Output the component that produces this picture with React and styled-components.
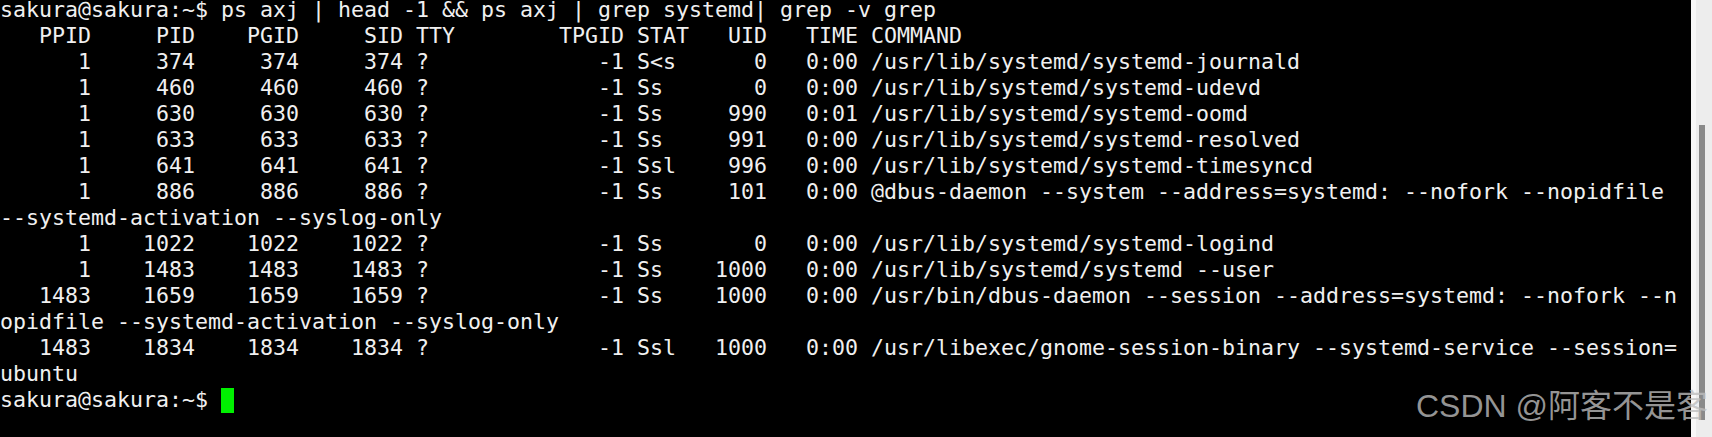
import React from 'react'
import styled, { createGlobalStyle } from 'styled-components'

const COLS = 129

const GlobalStyle = createGlobalStyle`
  html, body {
    margin: 0;
    padding: 0;
    background: #000;
  }
  body {
    width: 1712px;
    height: 437px;
    overflow: hidden;
  }
`

const Window = styled.div`
  position: relative;
  display: flex;
  width: 1712px;
  height: 437px;
  overflow: hidden;
`

const Screen = styled.div`
  flex: 1;
  background: #000;
  overflow: hidden;
`

const Output = styled.div`
  margin-top: -3px;
  font-family: 'DejaVu Sans Mono', 'Liberation Mono', monospace;
  font-size: 21.6px;
  line-height: 26px;
  color: #f0f0f0;
`

const Line = styled.div`
  height: 26px;
  white-space: pre;
`

const Cursor = styled.span`
  display: inline-block;
  width: 13px;
  height: 25px;
  margin-top: 1px;
  vertical-align: top;
  background: #00f000;
`

const Track = styled.div`
  width: 16px;
  background: #ededed;
  border-left: 5px solid #f8f8f8;
`

const Thumb = styled.div`
  width: 6px;
  height: 295px;
  margin: 125px 0 0 3px;
  background: #8a8a8a;
`

const Watermark = styled.div`
  position: absolute;
  left: 1416px;
  top: 390px;
  font-family: 'Liberation Sans', 'Noto Sans CJK SC', sans-serif;
  font-size: 32px;
  line-height: 32px;
  white-space: nowrap;
  color: rgba(190, 190, 190, 0.78);
`

const procs = [
  ['1', '374', 'S<s', '0', '0:00', '/usr/lib/systemd/systemd-journald'],
  ['1', '460', 'Ss', '0', '0:00', '/usr/lib/systemd/systemd-udevd'],
  ['1', '630', 'Ss', '990', '0:01', '/usr/lib/systemd/systemd-oomd'],
  ['1', '633', 'Ss', '991', '0:00', '/usr/lib/systemd/systemd-resolved'],
  ['1', '641', 'Ssl', '996', '0:00', '/usr/lib/systemd/systemd-timesyncd'],
  ['1', '886', 'Ss', '101', '0:00', '@dbus-daemon --system --address=systemd: --nofork --nopidfile --systemd-activation --syslog-only'],
  ['1', '1022', 'Ss', '0', '0:00', '/usr/lib/systemd/systemd-logind'],
  ['1', '1483', 'Ss', '1000', '0:00', '/usr/lib/systemd/systemd --user'],
  ['1483', '1659', 'Ss', '1000', '0:00', '/usr/bin/dbus-daemon --session --address=systemd: --nofork --nopidfile --systemd-activation --syslog-only'],
  ['1483', '1834', 'Ssl', '1000', '0:00', '/usr/libexec/gnome-session-binary --systemd-service --session=ubuntu'],
]

const r = (s, n) => s.padStart(n, ' ')
const l = (s, n) => s.padEnd(n, ' ')

const row = ([ppid, pid, stat, uid, time, cmd]) =>
  `${r(ppid, 7)} ${r(pid, 7)} ${r(pid, 7)} ${r(pid, 7)} ${l('?', 8)} ${r('-1', 7)} ${l(stat, 4)} ${r(uid, 5)} ${r(time, 6)} ${cmd}`

const wrap = (text) => {
  const out = []
  for (let i = 0; i < text.length; i += COLS) out.push(text.slice(i, i + COLS))
  return out
}

const prompt = 'sakura@sakura:~$ '

const lines = [
  `${prompt}ps axj | head -1 && ps axj | grep systemd| grep -v grep`,
  '   PPID     PID    PGID     SID TTY        TPGID STAT   UID   TIME COMMAND',
  ...procs.flatMap((p) => wrap(row(p))),
]

export default () => {
  return (
    <>
      <GlobalStyle />
      <Window>
        <Screen>
          <Output>
            {lines.map((text, i) => (
              <Line key={i}>{text}</Line>
            ))}
            <Line>
              {prompt}
              <Cursor />
            </Line>
          </Output>
        </Screen>
        <Track>
          <Thumb />
        </Track>
        <Watermark>CSDN @阿客不是客</Watermark>
      </Window>
    </>
  )
}
